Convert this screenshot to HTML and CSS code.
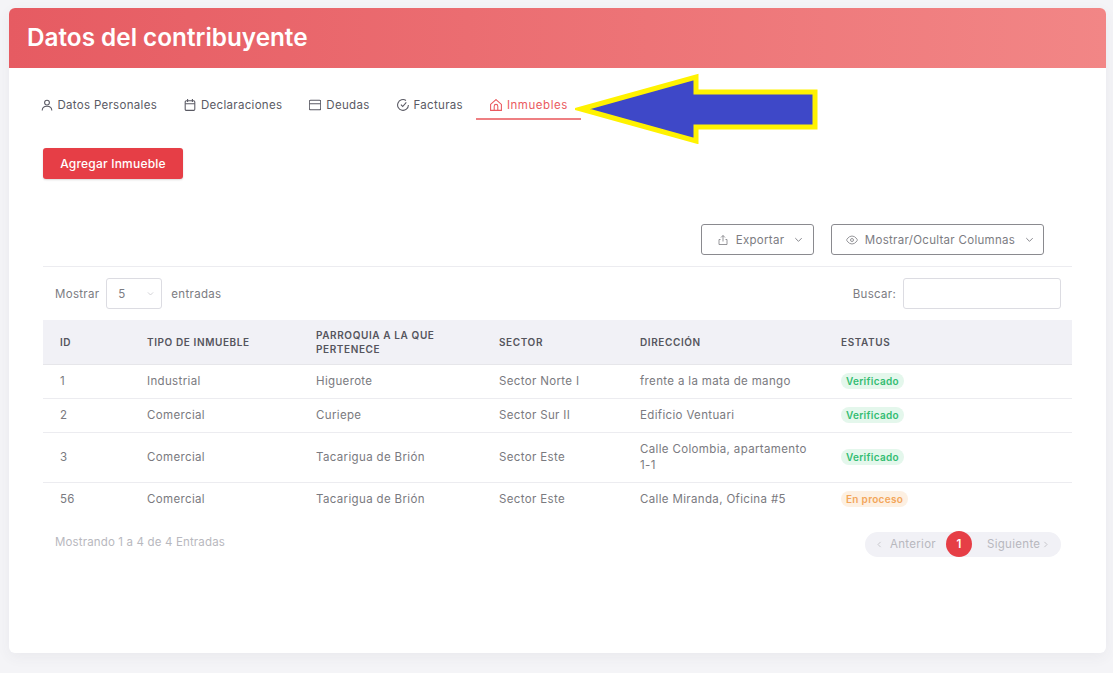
FILE: index.html
```html
<!DOCTYPE html>
<html lang="es">

<head>
    <meta charset="UTF-8">
    <meta name="viewport" content="width=device-width, initial-scale=1.0">
    <title>Datos del contribuyente</title>

    <link rel="stylesheet" href="styles.css">
</head>

<body>
    <div class="card">
        <div class="card-header">
            <h1>Datos del contribuyente</h1>
        </div>
        <div class="card-body">
            <!-- tabs -->
            <ul class="tabs">
                <li class="tab">
                    <svg class="tab-icon" viewBox="2 2 20 20"><circle cx="12" cy="8" r="4"/><path d="M4 21c0-4.500 3.500-7 8-7s8 2.500 8 7"/></svg>
                    Datos Personales
                </li>
                <li class="tab">
                    <svg class="tab-icon" viewBox="2 2 20 20"><rect x="4" y="5" width="16" height="16" rx="2"/><path d="M8 2v5M16 2v5M4 10h16"/></svg>
                    Declaraciones
                </li>
                <li class="tab">
                    <svg class="tab-icon" viewBox="2 2 20 20"><rect x="2.500" y="4" width="19" height="16" rx="2"/><path d="M2.500 10h19"/></svg>
                    Deudas
                </li>
                <li class="tab">
                    <svg class="tab-icon" viewBox="2 2 20 20"><path d="M21 12a9 9 0 1 1-4-7.500"/><path d="M8.500 11.500l3 3 6-7"/></svg>
                    Facturas
                </li>
                <li class="tab tab-active">
                    <svg class="tab-icon" viewBox="2 2 20 20"><path d="M3 11l9-8 9 8v10H3z"/><path d="M9 21v-7a3 3 0 0 1 6 0v7"/></svg>
                    Inmuebles
                </li>
            </ul>

            <div class="content">
                <button class="btn-add">Agregar Inmueble</button>

                <div class="tools">
                    <button class="btn-tool btn-export">
                        <svg class="tool-icon" viewBox="0 0 24 24"><path d="M12 15V3M8 7l4-4 4 4M7 11H4v10h16V11h-3"/></svg>
                        Exportar
                        <svg class="chevron" viewBox="0 0 24 24"><path d="M5 9l7 7 7-7"/></svg>
                    </button>
                    <button class="btn-tool btn-columns">
                        <svg class="tool-icon" viewBox="0 0 24 24"><path d="M1 12s4-8 11-8 11 8 11 8-4 8-11 8-11-8-11-8z"/><circle cx="12" cy="12" r="3"/></svg>
                        Mostrar/Ocultar Columnas
                        <svg class="chevron" viewBox="0 0 24 24"><path d="M5 9l7 7 7-7"/></svg>
                    </button>
                </div>

                <div class="controls">
                    <label class="control-label">
                        Mostrar
                        <span class="length-select">5
                            <svg class="select-chevron" viewBox="0 0 24 24"><path d="M5 9l7 7 7-7"/></svg>
                        </span>
                        entradas
                    </label>
                    <label class="control-label">
                        Buscar:
                        <input class="search-input" type="text">
                    </label>
                </div>

                <table class="data-table">
                    <colgroup>
                        <col class="col-id">
                        <col class="col-type">
                        <col class="col-parish">
                        <col class="col-sector">
                        <col class="col-address">
                        <col class="col-status">
                    </colgroup>
                    <thead>
                        <tr>
                            <th>ID</th>
                            <th>Tipo de inmueble</th>
                            <th>Parroquia a la que pertenece</th>
                            <th>Sector</th>
                            <th>Dirección</th>
                            <th>Estatus</th>
                        </tr>
                    </thead>
                    <tbody>
                        <tr>
                            <td>1</td>
                            <td>Industrial</td>
                            <td>Higuerote</td>
                            <td>Sector Norte I</td>
                            <td>frente a la mata de mango</td>
                            <td><span class="badge badge-ok">Verificado</span></td>
                        </tr>
                        <tr>
                            <td>2</td>
                            <td>Comercial</td>
                            <td>Curiepe</td>
                            <td>Sector Sur II</td>
                            <td>Edificio Ventuari</td>
                            <td><span class="badge badge-ok">Verificado</span></td>
                        </tr>
                        <tr>
                            <td>3</td>
                            <td>Comercial</td>
                            <td>Tacarigua de Brión</td>
                            <td>Sector Este</td>
                            <td>Calle Colombia, apartamento 1-1</td>
                            <td><span class="badge badge-ok">Verificado</span></td>
                        </tr>
                        <tr>
                            <td>56</td>
                            <td>Comercial</td>
                            <td>Tacarigua de Brión</td>
                            <td>Sector Este</td>
                            <td>Calle Miranda, Oficina #5</td>
                            <td><span class="badge badge-wait">En proceso</span></td>
                        </tr>
                    </tbody>
                </table>

                <div class="table-footer">
                    <span class="table-info">Mostrando 1 a 4 de 4 Entradas</span>
                    <div class="pagination">
                        <span class="page-link page-prev">
                            <svg class="page-arrow" viewBox="0 0 24 24"><path d="M15 5l-7 7 7 7"/></svg>
                            Anterior
                        </span>
                        <span class="page-current">1</span>
                        <span class="page-link page-next">
                            Siguiente
                            <svg class="page-arrow" viewBox="0 0 24 24"><path d="M9 5l7 7-7 7"/></svg>
                        </span>
                    </div>
                </div>
            </div>
        </div>
    </div>

    <!-- annotation arrow lying over the page -->
    <svg class="annotation" viewBox="0 0 244 72">
        <path d="M6 37L121 5V20H240V55H121V69Z"/>
    </svg>
</body>

</html>
```

FILE: styles.css
```css
* {
    box-sizing: border-box;
}

body {
    margin: 0;
    padding: 8px 7px 20px 9px;
    background: #f4f4f7;
    font-family: "Inter", "Liberation Sans", sans-serif;
    font-size: 11.5px;
    color: #555;
}

.card {
    position: relative;
    height: 645px;
    background: #fff;
    border-radius: 6px;
    box-shadow: 0 4px 14px rgba(60, 60, 80, 0.06);
    overflow: hidden;
}

.card-header {
    height: 60px;
    padding: 0 18px 2px;
    display: flex;
    align-items: center;
    background: linear-gradient(90deg, #e65b62, #f28686);
}

.card-header h1 {
    margin: 0;
    font-size: 24.3px;
    font-weight: 600;
    color: #fff;
}

.card-body {
    padding: 22px 18px 0;
}

/* tabs */
.tabs {
    display: flex;
    list-style: none;
    margin: 0;
    padding: 0;
}

.tab {
    display: flex;
    align-items: center;
    gap: 5px;
    height: 30px;
    padding: 2px 13.5px 0;
    letter-spacing: 0.3px;
    color: #5a5a64;
    border-bottom: 2px solid transparent;
}

.tab-active {
    letter-spacing: 0.55px;
    color: #ea5a60;
    border-bottom-color: #ee7f82;
}

.tab-icon {
    width: 12px;
    height: 12px;
    fill: none;
    stroke: currentColor;
    stroke-width: 1.800;
}

.content {
    padding: 0 16px;
}

.btn-add {
    display: block;
    width: 140px;
    height: 31px;
    margin-top: 28px;
    border: 0;
    border-radius: 3px;
    background: #e63e46;
    box-shadow: 0 1px 2px rgba(0, 0, 0, 0.15);
    color: #fff;
    font-family: inherit;
    font-size: 12px;
    font-weight: 500;
    letter-spacing: 0.2px;
}

/* export and column buttons */
.tools {
    display: flex;
    justify-content: flex-end;
    gap: 17px;
    margin-top: 45px;
    padding: 0 28px 11px 0;
    border-bottom: 1px solid #ececf0;
}

.btn-tool {
    display: flex;
    align-items: center;
    justify-content: center;
    gap: 7px;
    height: 31px;
    padding: 0 0 0 6px;
    background: #fff;
    border: 1px solid #8a8a8f;
    border-radius: 3px;
    color: #7c7c82;
    font-family: inherit;
    font-size: 11.5px;
    letter-spacing: 0.3px;
}

.btn-export {
    width: 113px;
}

.btn-columns {
    width: 213px;
}

.tool-icon {
    width: 12px;
    height: 12px;
    fill: none;
    stroke: #7c7c82;
    stroke-width: 1.600;
}

.chevron {
    width: 11px;
    height: 11px;
    margin-left: 2px;
    fill: none;
    stroke: #7c7c82;
    stroke-width: 2;
}

/* length and search */
.controls {
    display: flex;
    justify-content: space-between;
    margin-top: 11px;
    padding: 0 11px 0 12px;
}

.control-label {
    display: flex;
    align-items: center;
    gap: 7px;
    color: #7c7c82;
    letter-spacing: 0.3px;
}

.length-select {
    display: flex;
    align-items: center;
    justify-content: space-between;
    width: 56px;
    height: 31px;
    margin-right: 2px;
    padding: 0 6px 0 11px;
    border: 1px solid #dcdce2;
    border-radius: 3px;
}

.select-chevron {
    width: 9px;
    height: 9px;
    fill: none;
    stroke: #c4c4ca;
    stroke-width: 2;
}

.search-input {
    width: 158px;
    height: 31px;
    border: 1px solid #dcdce2;
    border-radius: 3px;
}

/* table */
.data-table {
    width: 100%;
    margin-top: 11px;
    border-collapse: collapse;
    table-layout: fixed;
}

.col-id { width: 87px; }
.col-type { width: 169px; }
.col-parish { width: 183px; }
.col-sector { width: 141px; }
.col-address { width: 201px; }

.data-table th {
    height: 44px;
    padding: 0 17px;
    background: #f1f1f6;
    border-bottom: 1px solid #e6e6ea;
    color: #55555d;
    font-size: 10px;
    font-weight: 600;
    line-height: 14px;
    letter-spacing: 0.6px;
    text-align: left;
    text-transform: uppercase;
}

.data-table td {
    padding: 8.500px 17px;
    border-bottom: 1px solid #ececf0;
    color: #7a7a80;
    line-height: 16px;
    letter-spacing: 0.35px;
}

.data-table tr:last-child td {
    border-bottom: 0;
}

.badge {
    display: block;
    width: fit-content;
    padding: 0 5px;
    border-radius: 8px;
    font-size: 10px;
    font-weight: 600;
    line-height: 16px;
    letter-spacing: 0.3px;
}

.badge-ok {
    background: #e4f7ec;
    color: #33bd72;
}

.badge-wait {
    background: #fdf0e2;
    color: #f3a65a;
}

/* footer */
.table-footer {
    display: flex;
    justify-content: space-between;
    align-items: flex-start;
    margin-top: 16px;
    padding: 0 11px 0 12px;
}

.table-info {
    margin-top: 3px;
    color: #b8b8be;
    letter-spacing: 0.15px;
}

.pagination {
    display: flex;
    align-items: center;
    height: 25px;
    width: 196px;
    background: #f1f1f6;
    border-radius: 13px;
    color: #b8b8be;
    letter-spacing: 0.3px;
}

.page-link {
    display: flex;
    align-items: center;
}

.page-prev {
    gap: 6px;
    width: 81px;
    padding-left: 10px;
}

.page-next {
    gap: 1px;
    padding-left: 15px;
}

.page-arrow {
    width: 9px;
    height: 9px;
    fill: none;
    stroke: #b8b8be;
    stroke-width: 2;
}

.page-current {
    width: 26px;
    height: 26px;
    border-radius: 50%;
    background: #e63e46;
    color: #fff;
    font-weight: 600;
    line-height: 26px;
    text-align: center;
}

.annotation {
    position: absolute;
    left: 575px;
    top: 72px;
    width: 244px;
    height: 72px;
    fill: #3e48c8;
    stroke: #fff200;
    stroke-width: 5;
}
```
